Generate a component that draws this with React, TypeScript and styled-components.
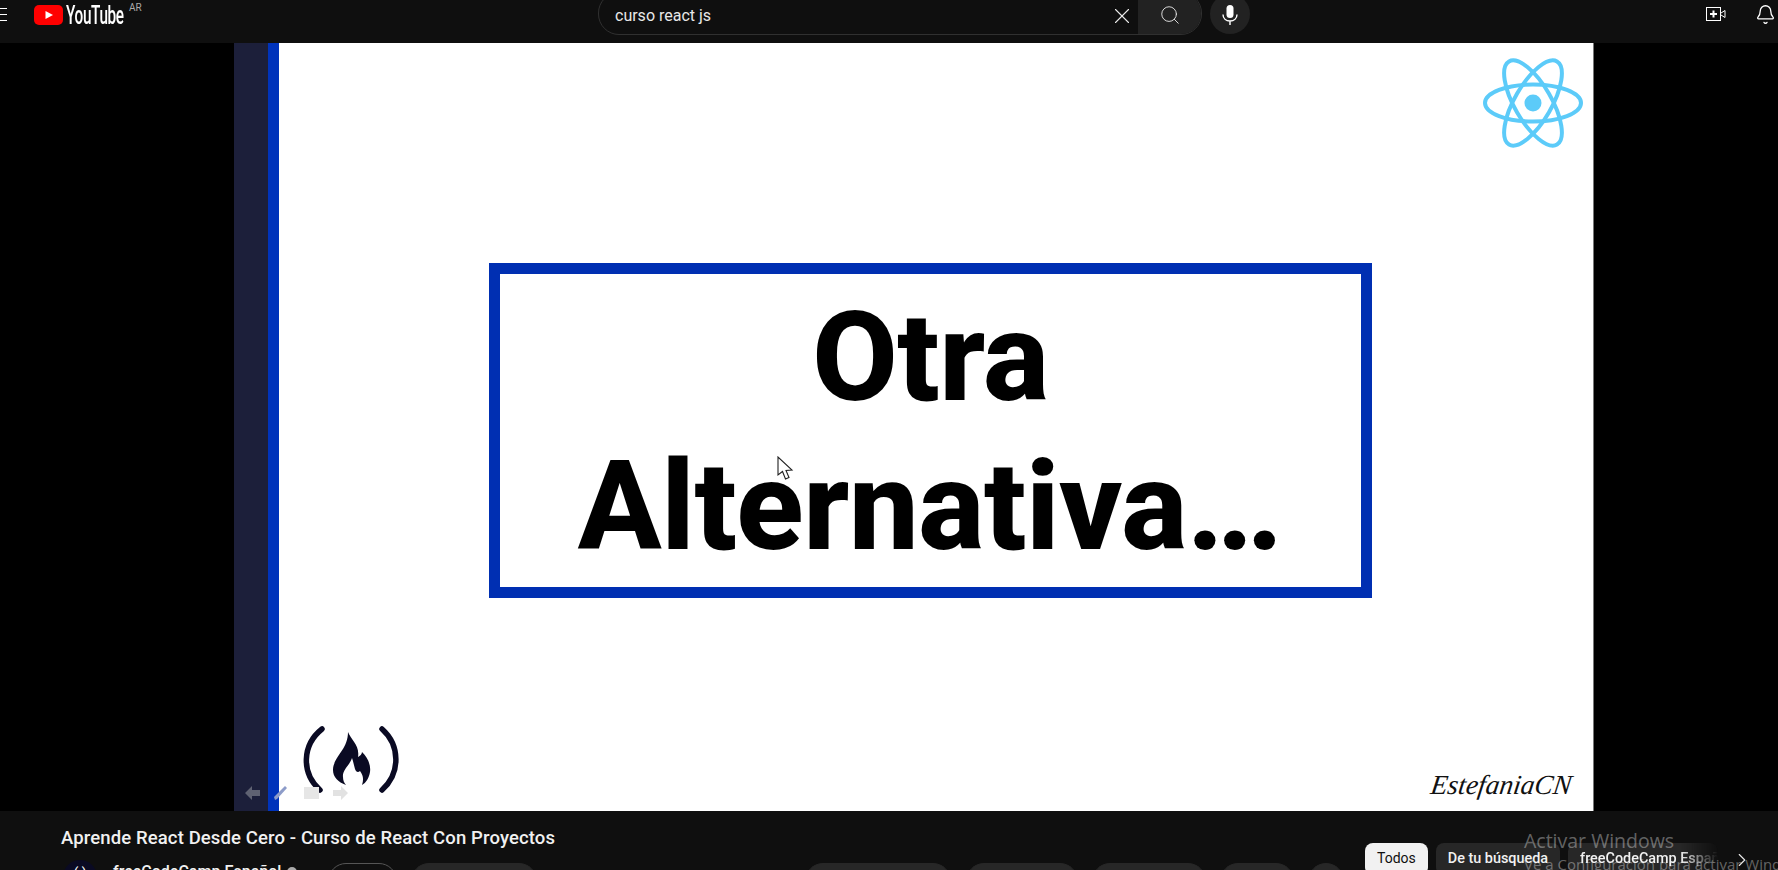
import { Bell, ChevronRight, Search, X } from "lucide-react";
import styled, { createGlobalStyle } from "styled-components";

const GlobalStyle = createGlobalStyle`
  html, body {
    margin: 0;
    padding: 0;
    background: #000;
    overflow: hidden;
  }
  * {
    box-sizing: border-box;
  }
`;

const Page = styled.div`
  width: 1778px;
  height: 870px;
  display: flex;
  flex-direction: column;
  position: relative;
  overflow: hidden;
  font-family: Roboto, "Liberation Sans", sans-serif;
`;

const Header = styled.header`
  height: 43px;
  flex: none;
  display: flex;
  align-items: flex-start;
  background: #0f0f0f;
  color: #fff;
  overflow: hidden;
`;

const Hamburger = styled.div`
  width: 7px;
  height: 13px;
  margin-top: 8px;
  display: flex;
  flex-direction: column;
  justify-content: space-between;
  span {
    height: 1px;
    background: #fff;
  }
`;

const LogoLink = styled.div`
  display: flex;
  align-items: center;
  margin-left: 27px;
  margin-top: 5px;
  height: 20px;
`;

const LogoWord = styled.span`
  font-size: 26px;
  font-weight: 500;
  letter-spacing: -0.6px;
  color: #fff;
  margin-left: 3px;
  display: inline-block;
  width: 59px;
  transform: scaleX(0.59);
  transform-origin: left center;
  white-space: nowrap;
`;

const Region = styled.span`
  font-size: 10px;
  color: #aaa;
  margin-left: 4px;
  margin-top: -14px;
  width: 20px;
  line-height: 12px;
`;

const SearchBox = styled.div`
  width: 604px;
  height: 43px;
  margin-top: -8px;
  margin-left: 449px;
  display: flex;
  border: 1px solid #303030;
  border-radius: 21px;
  overflow: hidden;
`;

const SearchInput = styled.div`
  flex: 1;
  display: flex;
  align-items: center;
  justify-content: space-between;
  padding: 4px 3px 0 16px;
  font-size: 16px;
  color: #e8e8e8;
`;

const SearchButton = styled.div`
  width: 63px;
  display: flex;
  align-items: center;
  justify-content: center;
  padding-top: 3px;
  background: #222;
  color: #e8e8e8;
`;

const MicButton = styled.div`
  width: 40px;
  height: 40px;
  margin-top: -6px;
  margin-left: 8px;
  border-radius: 50%;
  background: #222;
  display: flex;
  align-items: center;
  justify-content: center;
  padding-top: 2px;
`;

const HeaderActions = styled.div`
  display: flex;
  align-items: center;
  gap: 29px;
  margin-left: 456px;
  margin-top: 4px;
`;

const VideoArea = styled.main`
  height: 768px;
  flex: none;
  background: #000;
  padding-left: 234px;
`;

const Slide = styled.section`
  width: 1360px;
  height: 768px;
  display: flex;
  position: relative;
  border-right: 1px solid #777;
`;

const NavyStrip = styled.div`
  width: 34px;
  background: #1c1f3a;
`;

const BlueStrip = styled.div`
  width: 11px;
  background: #0033bb;
`;

const Canvas = styled.div`
  flex: 1;
  background: #fff;
  display: flex;
  align-items: center;
  justify-content: center;
  padding: 7px 11px 0 0;
  position: relative;
`;

const Frame = styled.div`
  width: 883px;
  height: 335px;
  border: 11px solid #002fb2;
  display: flex;
  flex-direction: column;
  align-items: center;
  padding-top: 9px;
`;

const BigLine = styled.div`
  font-size: 124px;
  font-weight: 800;
  line-height: 149px;
  letter-spacing: -0.4px;
  color: #000;
  white-space: nowrap;
`;

const Dots = styled.span`
  letter-spacing: -7px;
  margin-right: 7px;
`;

const ReactMark = styled.svg`
  position: absolute;
  right: 10px;
  top: 14px;
`;

const FlameMark = styled.svg`
  position: absolute;
  left: 21px;
  bottom: 16px;
`;

const Signature = styled.div`
  position: absolute;
  right: 21px;
  bottom: 7px;
  font-family: "Liberation Serif", serif;
  font-style: italic;
  font-size: 27.5px;
  line-height: 38px;
  color: #111;
  transform: skewX(-8deg);
`;

const Pointer = styled.svg`
  position: absolute;
  left: 498px;
  top: 413px;
`;

const SlideControls = styled.svg`
  position: absolute;
  left: 10px;
  bottom: 10px;
`;

const InfoBar = styled.footer`
  height: 59px;
  flex: none;
  background: #0f0f0f;
  display: flex;
  overflow: hidden;
`;

const InfoLeft = styled.div`
  width: 1280px;
  margin-left: 61px;
  flex: none;
`;

const VideoTitle = styled.h1`
  margin: 16px 0 0;
  font-size: 18.5px;
  line-height: 22px;
  font-weight: 500;
  color: #f1f1f1;
  letter-spacing: 0.12px;
`;

const ActionRow = styled.div`
  display: flex;
  align-items: flex-start;
  margin-top: 11px;
`;

const Avatar = styled.div`
  width: 34px;
  height: 34px;
  margin-left: 2px;
  border-radius: 50%;
  background: #0a0a23;
  flex: none;
  color: #fff;
  font-size: 14px;
  line-height: 26px;
  text-align: center;
`;

const ChannelName = styled.div`
  margin-left: 16px;
  margin-top: 2px;
  width: 175px;
  display: flex;
  align-items: center;
  gap: 6px;
  font-size: 16px;
  font-weight: 500;
  line-height: 20px;
  color: #f1f1f1;
  white-space: nowrap;
`;

const VerifiedDot = styled.span`
  width: 10px;
  height: 10px;
  border-radius: 50%;
  background: #aaa;
  flex: none;
`;

const ActionPill = styled.div<{ $width: number; $outline?: boolean; $gap: number }>`
  width: ${(p) => p.$width}px;
  height: 36px;
  margin-top: 3px;
  margin-left: ${(p) => p.$gap}px;
  border-radius: 18px;
  flex: none;
  background: ${(p) => (p.$outline ? "transparent" : "#272727")};
  border: 1px solid ${(p) => (p.$outline ? "#555" : "#272727")};
`;

const Chips = styled.div`
  margin-left: 24px;
  margin-top: 32px;
  display: flex;
  gap: 8px;
  align-items: flex-start;
`;

const Chip = styled.div<{ $active?: boolean; $fade?: boolean }>`
  height: 32px;
  padding: 0 12px 2px;
  border-radius: 8px;
  display: flex;
  align-items: center;
  font-size: ${(p) => (p.$active ? "14px" : "14.4px")};
  font-weight: ${(p) => (p.$active ? 400 : 500)};
  white-space: nowrap;
  flex: none;
  overflow: hidden;
  background: ${(p) => (p.$active ? "#f1f1f1" : "#272727")};
  color: ${(p) => (p.$active ? "#0f0f0f" : "#f1f1f1")};
  ${(p) =>
    p.$fade &&
    `width: 150px;
     -webkit-mask-image: linear-gradient(to right, #000 75%, transparent 100%);
     mask-image: linear-gradient(to right, #000 75%, transparent 100%);`}
`;

const ChipNext = styled.div`
  position: absolute;
  left: 1731px;
  bottom: -1px;
  height: 22px;
  color: #e8e8e8;
`;

const Watermark = styled.div`
  position: absolute;
  left: 1524px;
  top: 828px;
  font-family: "Open Sans", "Liberation Sans", sans-serif;
  color: rgba(255, 255, 255, 0.36);
  white-space: nowrap;
  pointer-events: none;
`;

const WatermarkTitle = styled.div`
  font-size: 19.5px;
  line-height: 26px;
`;

const WatermarkNote = styled.div`
  font-size: 15px;
  line-height: 20px;
`;

function MicIcon() {
  return (
    <svg width="20" height="24" viewBox="0 0 20 24" fill="none">
      <rect x="6.5" y="2" width="7" height="13" rx="3.5" fill="#fff" />
      <path d="M3 11.5c0 4 3 6.5 7 6.5s7-2.5 7-6.5M10 18v4" stroke="#fff" strokeWidth="1.4" />
    </svg>
  );
}

function CreateIcon() {
  return (
    <svg width="20" height="15" viewBox="0 0 20 15" fill="none">
      <rect x="0.5" y="0.5" width="14" height="13" stroke="#fff" />
      <path d="M7.5 3.5v7M4 7h7" stroke="#fff" strokeWidth="2" />
      <path d="M15 6l4-2.5v7L15 8" stroke="#fff" />
    </svg>
  );
}

function App() {
  return (
    <Page>
      <GlobalStyle />
      <Header>
        <Hamburger>
          <span />
          <span />
          <span />
        </Hamburger>
        <LogoLink>
          <svg width="29" height="20" viewBox="0 0 29 20">
            <rect width="29" height="20" rx="5" fill="#f00" />
            <path d="M11.5 6l7.5 4-7.5 4z" fill="#fff" />
          </svg>
          <LogoWord>YouTube</LogoWord>
          <Region>AR</Region>
        </LogoLink>
        <SearchBox>
          <SearchInput>
            curso react js
            <X size={26} strokeWidth={1} />
          </SearchInput>
          <SearchButton>
            <Search size={22} strokeWidth={1} />
          </SearchButton>
        </SearchBox>
        <MicButton>
          <MicIcon />
        </MicButton>
        <HeaderActions>
          <CreateIcon />
          <Bell size={21} strokeWidth={1.5} />
        </HeaderActions>
      </Header>

      <VideoArea>
        <Slide>
          <NavyStrip />
          <BlueStrip />
          <Canvas>
            <Frame>
              <BigLine>Otra</BigLine>
              <BigLine>
                Alternativa<Dots>...</Dots>
              </BigLine>
            </Frame>
            <ReactMark width="100" height="92" viewBox="-50 -46 100 92" fill="none" stroke="#5ccbf9" strokeWidth="4">
              <ellipse rx="48" ry="18.5" />
              <ellipse rx="48" ry="18.5" transform="rotate(60)" />
              <ellipse rx="48" ry="18.5" transform="rotate(120)" />
              <circle r="8.5" fill="#5ccbf9" stroke="none" />
            </ReactMark>
            <FlameMark width="104" height="70" viewBox="0 0 104 70" fill="none">
              <path d="M22 4C2 20 1 48 20 65M82 4C100 20 101 48 82 65" stroke="#0a0a23" strokeWidth="5.5" strokeLinecap="round" />
              <path
                d="M48 7C51 15 60 20 58 32C60 31 62 29 62 27C68 33 71 40 70 47C69 53 66 58 62 60C64 54 63 50 60 46C58 48 56 47 55 44C54 40 53 36 52 33C50 40 42 45 43 52C43 55 44 58 46 60C38 57 33 52 33 45C33 32 48 25 48 7Z"
                fill="#0a0a23"
              />
            </FlameMark>
            <Signature>EstefaniaCN</Signature>
            <Pointer width="18" height="26" viewBox="0 0 18 26">
              <path d="M1 1L1 19L5.5 15.5L8.5 23L12 21.5L9 14.5L15 14Z" fill="#fff" stroke="#222" strokeWidth="1.1" />
            </Pointer>
          </Canvas>
          <SlideControls width="110" height="16" viewBox="0 0 110 16" fill="none">
            <path d="M8 1L1 8l7 7v-4h8V5H8z" fill="#5f6272" />
            <path d="M31 15l-1-3L41 1l2 2L33 14z" fill="#8d9cc9" />
            <rect x="60" y="2" width="15" height="12" fill="#e6e6e6" />
            <path d="M97 1l7 7-7 7v-4h-8V5h8z" fill="#e2e2e2" />
          </SlideControls>
        </Slide>
      </VideoArea>

      <InfoBar>
        <InfoLeft>
          <VideoTitle>Aprende React Desde Cero - Curso de React Con Proyectos</VideoTitle>
          <ActionRow>
            <Avatar>( )</Avatar>
            <ChannelName>
              freeCodeCamp Español
              <VerifiedDot />
            </ChannelName>
            <ActionPill $width={69} $gap={40} $outline />
            <ActionPill $width={126} $gap={14} />
            <ActionPill $width={146} $gap={268} />
            <ActionPill $width={112} $gap={15} />
            <ActionPill $width={114} $gap={14} />
            <ActionPill $width={74} $gap={14} />
            <ActionPill $width={36} $gap={14} />
          </ActionRow>
        </InfoLeft>
        <Chips>
          <Chip $active>Todos</Chip>
          <Chip>De tu búsqueda</Chip>
          <Chip $fade>freeCodeCamp Español</Chip>
        </Chips>
      </InfoBar>
      <ChipNext>
        <ChevronRight size={22} strokeWidth={1.2} />
      </ChipNext>
      <Watermark>
        <WatermarkTitle>Activar Windows</WatermarkTitle>
        <WatermarkNote>Ve a Configuración para activar Windows.</WatermarkNote>
      </Watermark>
    </Page>
  );
}

export default App;
